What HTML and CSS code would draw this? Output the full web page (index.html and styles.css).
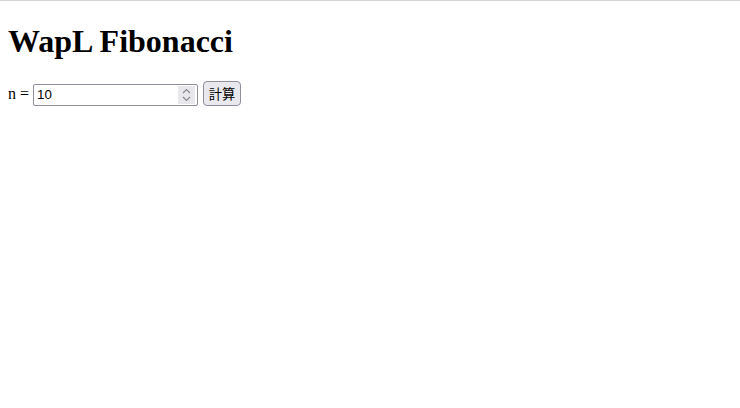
FILE: index.html
```html
<!DOCTYPE html>
<html lang="ja">

<head>
  <meta charset="UTF-8">
  <title>WapL Fibonacci</title>
  <link rel="stylesheet" href="styles.css">
</head>

<body>
  <h1>WapL Fibonacci</h1>
  <div class="form">
    <label for="n">n =</label>
    <span class="num">
      <input type="number" id="n" value="10" min="0">
      <span class="spin">
        <svg width="9" height="14" viewBox="0 0 9 14">
          <path d="M1 5 L4.5 1.5 L8 5 M1 9 L4.5 12.5 L8 9" fill="none" stroke="#8a8a8a" stroke-width="1.2"/>
        </svg>
      </span>
    </span>
    <button id="calc">計算</button>
  </div>
  <div id="result"></div>
</body>

</html>
```

FILE: styles.css
```css
html {
  border-top: 1px solid #d4d4d4;
}

body {
  font-family: "Liberation Serif", serif;
  margin: 8px;
}

h1 {
  font-size: 32px;
  margin: 14px 0 21px;
}

.form {
  font-family: "Liberation Serif", serif;
  font-size: 16px;
}

.num {
  position: relative;
  display: inline-block;
}

input {
  font-family: "Liberation Sans", "Noto Sans CJK JP", sans-serif;
  font-size: 13.33px;
  width: 165px;
  height: 22px;
  box-sizing: border-box;
  padding: 1px 3px;
  border: 1px solid #8f8f9d;
  border-radius: 2px;
  -moz-appearance: textfield;
}

input::-webkit-inner-spin-button,
input::-webkit-outer-spin-button {
  -webkit-appearance: none;
  margin: 0;
}

.spin {
  position: absolute;
  top: 2px;
  right: 3px;
  width: 17px;
  height: 18px;
  background: #e8e8ec;
  display: flex;
  align-items: center;
  justify-content: center;
}

button {
  font-family: "Liberation Sans", "Noto Sans CJK JP", sans-serif;
  font-size: 13.33px;
  width: 38px;
  height: 25px;
  padding: 1px 4px;
  margin-left: 1px;
  border: 1px solid #8f8f9d;
  border-radius: 4px;
  background: #e9e9ed;
  color: #000;
}
```
